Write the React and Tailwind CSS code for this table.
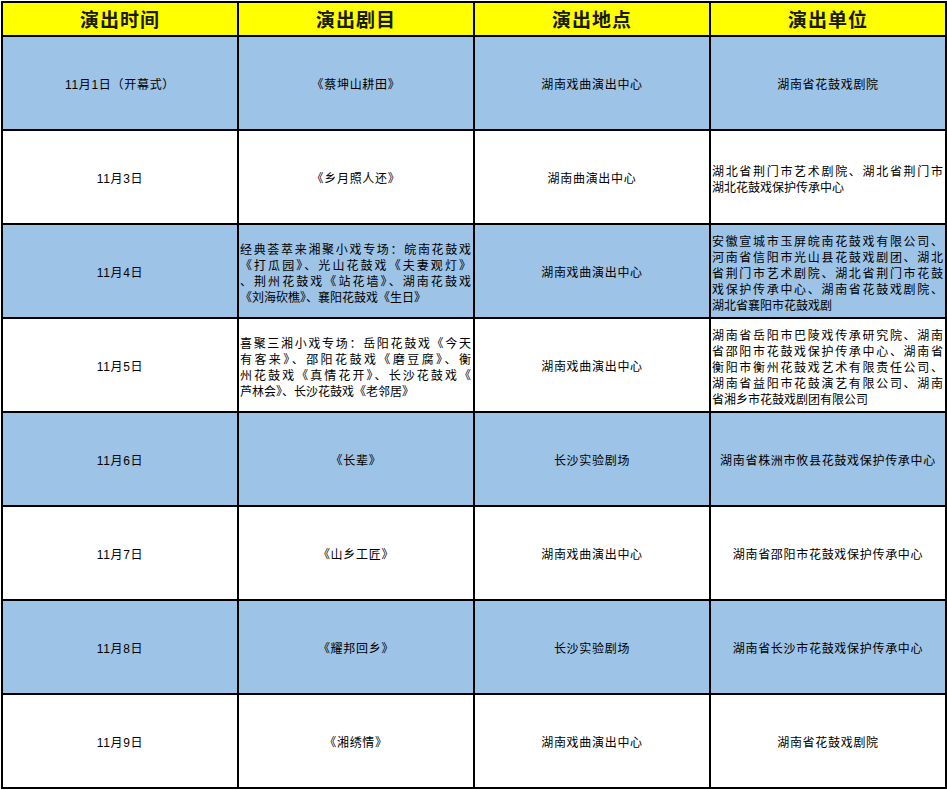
const HEADERS = ['演出时间', '演出剧目', '演出地点', '演出单位']

// each multi-line cell is an array of lines, the last one is not stretched
const ROWS = [
  {
    date: '11月1日（开幕式）',
    play: '《蔡坤山耕田》',
    venue: '湖南戏曲演出中心',
    unit: '湖南省花鼓戏剧院',
  },
  {
    date: '11月3日',
    play: '《乡月照人还》',
    venue: '湖南曲演出中心',
    unit: ['湖北省荆门市艺术剧院、湖北省荆门市', '湖北花鼓戏保护传承中心'],
  },
  {
    date: '11月4日',
    play: [
      '经典荟萃来湘聚小戏专场：皖南花鼓戏',
      '《打瓜园》、光山花鼓戏《夫妻观灯》',
      '、荆州花鼓戏《站花墙》、湖南花鼓戏',
      '《刘海砍樵》、襄阳花鼓戏《生日》',
    ],
    venue: '湖南戏曲演出中心',
    unit: [
      '安徽宣城市玉屏皖南花鼓戏有限公司、',
      '河南省信阳市光山县花鼓戏剧团、湖北',
      '省荆门市艺术剧院、湖北省荆门市花鼓',
      '戏保护传承中心、湖南省花鼓戏剧院、',
      '湖北省襄阳市花鼓戏剧',
    ],
  },
  {
    date: '11月5日',
    play: [
      '喜聚三湘小戏专场：岳阳花鼓戏《今天',
      '有客来》、邵阳花鼓戏《磨豆腐》、衡',
      '州花鼓戏《真情花开》、长沙花鼓戏《',
      '芦林会》、长沙花鼓戏《老邻居》',
    ],
    venue: '湖南戏曲演出中心',
    unit: [
      '湖南省岳阳市巴陵戏传承研究院、湖南',
      '省邵阳市花鼓戏保护传承中心、湖南省',
      '衡阳市衡州花鼓戏艺术有限责任公司、',
      '湖南省益阳市花鼓演艺有限公司、湖南',
      '省湘乡市花鼓戏剧团有限公司',
    ],
  },
  {
    date: '11月6日',
    play: '《长辈》',
    venue: '长沙实验剧场',
    unit: '湖南省株洲市攸县花鼓戏保护传承中心',
  },
  {
    date: '11月7日',
    play: '《山乡工匠》',
    venue: '湖南戏曲演出中心',
    unit: '湖南省邵阳市花鼓戏保护传承中心',
  },
  {
    date: '11月8日',
    play: '《耀邦回乡》',
    venue: '长沙实验剧场',
    unit: '湖南省长沙市花鼓戏保护传承中心',
  },
  {
    date: '11月9日',
    play: '《湘绣情》',
    venue: '湖南戏曲演出中心',
    unit: '湖南省花鼓戏剧院',
  },
]

function Cell({ value, blue }) {
  const bg = blue ? 'bg-[#9DC3E6]' : 'bg-white'
  if (Array.isArray(value)) {
    return (
      <div className={`h-[94px] border-r-2 border-b-2 border-black ${bg} flex flex-col justify-center pl-px pr-[2px] pt-[6px]`}>
        {value.map((line, i) => (
          <div
            key={i}
            className={`leading-[16px] text-justify ${i < value.length - 1 ? '[text-align-last:justify]' : ''}`}
          >
            {line}
          </div>
        ))}
      </div>
    )
  }
  return (
    <div className={`h-[94px] border-r-2 border-b-2 border-black ${bg} flex items-center justify-center pt-[4px] tracking-[0.7px]`}>
      {value}
    </div>
  )
}

export default function App() {
  return (
    <div className="min-h-screen bg-white pt-px pl-px">
      <div className="grid grid-cols-[236px_236px_236px_236px] w-[946px] border-l-2 border-t-2 border-black text-[12px] text-black font-['Liberation_Sans','Noto_Sans_CJK_SC',sans-serif]">
        {HEADERS.map((h) => (
          <div
            key={h}
            className="h-[34px] border-r-2 border-b-2 border-black bg-[#FFFF00] flex items-center justify-center pt-px text-[19px] font-bold tracking-[1px] text-[#1a1a00] font-['Noto_Sans_CJK_SC',serif]"
          >
            {h}
          </div>
        ))}
        {ROWS.map((row, i) => {
          const blue = i % 2 === 0
          return [row.date, row.play, row.venue, row.unit].map((v, j) => (
            <Cell key={`${i}-${j}`} value={v} blue={blue} />
          ))
        })}
      </div>
    </div>
  )
}
